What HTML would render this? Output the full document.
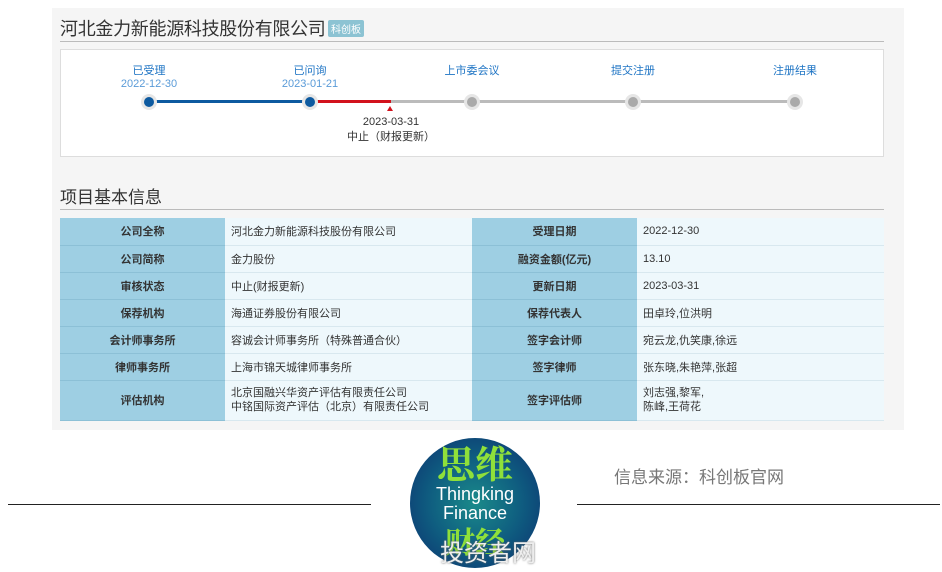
<!DOCTYPE html>
<html><head><meta charset="utf-8"><style>
*{margin:0;padding:0;box-sizing:border-box}
body{width:942px;height:572px;background:#fff;font-family:"Liberation Sans","Noto Sans CJK SC",sans-serif;position:relative;overflow:hidden}
.panel{position:absolute;left:52px;top:8px;width:852px;height:422px;background:#f5f5f5}
.abs{position:absolute}
.t{font-size:11px;white-space:nowrap}
table{position:absolute;left:60px;top:218px;width:824px;border-collapse:collapse;font-size:11px}
td{height:27px;border-bottom:1px solid #d8e8ef;padding:0 6px;color:#333}
td.l{background:#9ecfe3;text-align:center;font-weight:bold;width:165px;border-bottom:1px solid #8cc0d6}
td.v{background:#eef8fc;width:247px}
</style></head><body>
<div class="panel"></div>
<div class="abs" style="left:60px;top:15px;font-size:18px;color:#333;letter-spacing:-0.3px">河北金力新能源科技股份有限公司</div>
<div class="abs t" style="left:328px;top:20px;background:#8cc3d3;color:#fff;font-size:10px;padding:1px 3px;border-radius:2px">科创板</div>
<div class="abs" style="left:60px;top:41px;width:824px;height:1px;background:#bbb"></div>
<div class="abs" style="left:60px;top:49px;width:824px;height:108px;background:#fff;border:1px solid #ddd"></div>
<div class="abs t" style="left:109px;top:62px;width:80px;text-align:center;color:#1e74c4">已受理<br><span style="color:#5a9bd8">2022-12-30</span></div>
<div class="abs t" style="left:270px;top:62px;width:80px;text-align:center;color:#1e74c4">已问询<br><span style="color:#5a9bd8">2023-01-21</span></div>
<div class="abs t" style="left:432px;top:62px;width:80px;text-align:center;color:#1e74c4">上市委会议</div>
<div class="abs t" style="left:593px;top:62px;width:80px;text-align:center;color:#1e74c4">提交注册</div>
<div class="abs t" style="left:755px;top:62px;width:80px;text-align:center;color:#1e74c4">注册结果</div>
<div class="abs" style="left:149px;top:100px;width:161px;height:3px;background:#0d5aa0"></div>
<div class="abs" style="left:310px;top:100px;width:81px;height:3px;background:#d2121c"></div>
<div class="abs" style="left:391px;top:100px;width:404px;height:3px;background:#bbb"></div>
<div class="abs" style="left:141px;top:94px;width:16px;height:16px;border-radius:50%;background:#e6e6e6"></div>
<div class="abs" style="left:144px;top:97px;width:10px;height:10px;border-radius:50%;background:#0d5aa0"></div>
<div class="abs" style="left:302px;top:94px;width:16px;height:16px;border-radius:50%;background:#e6e6e6"></div>
<div class="abs" style="left:305px;top:97px;width:10px;height:10px;border-radius:50%;background:#0d5aa0"></div>
<div class="abs" style="left:464px;top:94px;width:16px;height:16px;border-radius:50%;background:#e6e6e6"></div>
<div class="abs" style="left:467px;top:97px;width:10px;height:10px;border-radius:50%;background:#aaa"></div>
<div class="abs" style="left:625px;top:94px;width:16px;height:16px;border-radius:50%;background:#e6e6e6"></div>
<div class="abs" style="left:628px;top:97px;width:10px;height:10px;border-radius:50%;background:#aaa"></div>
<div class="abs" style="left:787px;top:94px;width:16px;height:16px;border-radius:50%;background:#e6e6e6"></div>
<div class="abs" style="left:790px;top:97px;width:10px;height:10px;border-radius:50%;background:#aaa"></div>
<div class="abs" style="left:387px;top:106px;width:0;height:0;border-left:3px solid transparent;border-right:3px solid transparent;border-bottom:5px solid #d2121c"></div>
<div class="abs t" style="left:341px;top:115px;width:100px;text-align:center;color:#333;line-height:15px">2023-03-31<br>中止（财报更新）</div>
<div class="abs" style="left:60px;top:183px;font-size:17px;color:#333">项目基本信息</div>
<div class="abs" style="left:60px;top:209px;width:824px;height:1px;background:#bbb"></div>
<table>
<tr><td class="l">公司全称</td><td class="v">河北金力新能源科技股份有限公司</td><td class="l">受理日期</td><td class="v">2022-12-30</td></tr>
<tr><td class="l">公司简称</td><td class="v">金力股份</td><td class="l">融资金额(亿元)</td><td class="v">13.10</td></tr>
<tr><td class="l">审核状态</td><td class="v">中止(财报更新)</td><td class="l">更新日期</td><td class="v">2023-03-31</td></tr>
<tr><td class="l">保荐机构</td><td class="v">海通证券股份有限公司</td><td class="l">保荐代表人</td><td class="v">田卓玲,位洪明</td></tr>
<tr><td class="l">会计师事务所</td><td class="v">容诚会计师事务所（特殊普通合伙）</td><td class="l">签字会计师</td><td class="v">宛云龙,仇笑康,徐远</td></tr>
<tr><td class="l">律师事务所</td><td class="v">上海市锦天城律师事务所</td><td class="l">签字律师</td><td class="v">张东晓,朱艳萍,张超</td></tr>
<tr><td class="l" style="height:40px">评估机构</td><td class="v" style="line-height:14px">北京国融兴华资产评估有限责任公司<br>中铭国际资产评估（北京）有限责任公司</td><td class="l">签字评估师</td><td class="v" style="line-height:14px">刘志强,黎军,<br>陈峰,王荷花</td></tr>
</table>
<div class="abs" style="left:8px;top:504px;width:363px;height:1px;background:#222"></div>
<div class="abs" style="left:577px;top:504px;width:363px;height:1px;background:#222"></div>
<div class="abs" style="left:410px;top:438px;width:130px;height:130px;border-radius:50%;background:radial-gradient(circle,#1a8a8a 0%,#0f5d80 50%,#0b2d6e 100%)"></div>
<div class="abs" style="left:410px;top:440px;width:130px;text-align:center;font-size:38px;color:#8fe03a;font-family:'Noto Serif CJK SC',serif;line-height:44px;font-weight:bold">思维</div>
<div class="abs" style="left:410px;top:485px;width:130px;text-align:center;font-size:18px;color:#fff;line-height:19px">Thingking<br>Finance</div>
<div class="abs" style="left:410px;top:520px;width:130px;text-align:center;font-size:30px;color:#8fe03a;font-family:'Noto Serif CJK SC',serif;line-height:40px;font-weight:bold">财经</div>
<div class="abs" style="left:440px;top:533px;font-size:24px;color:#eee;text-shadow:0 0 2px #666">投资者网</div>
<div class="abs" style="left:614px;top:463px;font-size:17px;color:#777">信息来源：科创板官网</div>
</body></html>
